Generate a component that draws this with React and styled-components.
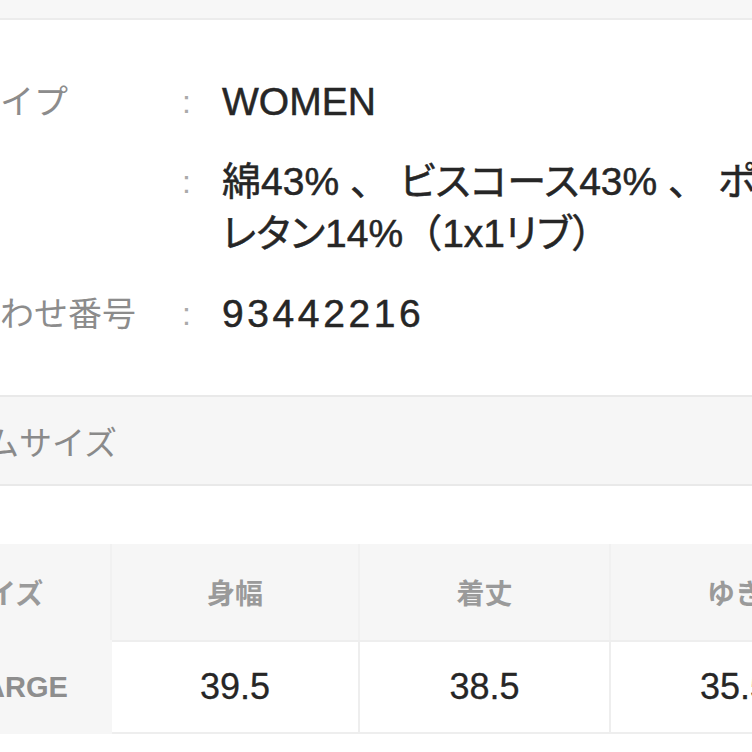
import React from 'react';
import styled, { createGlobalStyle } from 'styled-components';

const GlobalStyle = createGlobalStyle`
  html, body {
    margin: 0;
    padding: 0;
    background: #ffffff;
    overflow: hidden;
  }
  body {
    width: 752px;
    height: 752px;
    font-family: "Liberation Sans", "Noto Sans CJK JP", sans-serif;
    color: #2b2b2b;
  }
`

const Page = styled.div`
    width: 752px;
    height: 752px;
    overflow: hidden;
    display: flex;
    flex-direction: column;
`

const TopBar = styled.div`
    height: 18px;
    flex-shrink: 0;
    background: #f7f7f7;
    border-bottom: 2px solid #ececec;
`

const DetailList = styled.div`
    display: flex;
    flex-direction: column;
    gap: 28px;
    padding: 56px 0 55px;
`

const DetailRow = styled.div`
    display: grid;
    grid-template-columns: 182px 40px 1fr;
    line-height: 52px;
`

const Label = styled.div`
    font-size: 34px;
    color: #8c8c8c;
    white-space: nowrap;
`

const Colon = styled.div`
    font-size: 32px;
    color: #aaaaaa;
`

const Value = styled.div`
    font-size: 39px;
    color: #262626;
    white-space: nowrap;
    font-feature-settings: "palt";
    -webkit-text-stroke: 0.5px #262626;
    letter-spacing: ${props => props.spread ? '3.6px' : '0'};
`

// full-width punctuation keeps its whole em box
const Punct = styled.span`
    font-feature-settings: normal;
`

const SectionBand = styled.div`
    height: 87px;
    flex-shrink: 0;
    display: flex;
    align-items: center;
    background: #f6f6f6;
    border-top: 2px solid #e9e9e9;
    border-bottom: 2px solid #e9e9e9;
    font-size: 33px;
    color: #8a8a8a;
    white-space: nowrap;
    text-indent: -14px;
`

const SizeTable = styled.div`
    margin-top: 58px;
    display: grid;
    grid-template-columns: 112px 248px 251px 250px;
    grid-template-rows: 96px 94px;
    width: 861px;
`

const HeadCell = styled.div`
    display: flex;
    align-items: center;
    justify-content: ${props => props.first ? 'flex-start' : 'center'};
    background: #f6f6f6;
    border-right: 2px solid #f1f1f1;
    font-size: 28px;
    font-weight: 700;
    color: #9a9a9a;
    white-space: nowrap;
    text-indent: ${props => props.first ? '-12px' : '0'};
`

const RowHead = styled.div`
    display: flex;
    align-items: center;
    background: #f6f6f6;
    font-size: 29px;
    font-weight: 700;
    color: #8e8e8e;
    white-space: nowrap;
    text-indent: -16px;
`

const DataCell = styled.div`
    display: flex;
    align-items: center;
    justify-content: center;
    background: #ffffff;
    border: 2px solid #eeeeee;
    border-left: none;
    font-size: 36px;
    color: #262626;
    -webkit-text-stroke: 0.3px #262626;
    white-space: nowrap;
`

const details = [
    { label: 'イプ', lines: [['WOMEN']] },
    { label: '', lines: [
        ['綿43% ', <Punct key="a">、</Punct>, ' ビスコース43% ', <Punct key="b">、</Punct>, ' ポ'],
        ['レタン14%', <Punct key="c">（</Punct>, '1x1リブ', <Punct key="d">）</Punct>],
    ] },
    { label: 'わせ番号', lines: [['93442216']], spread: true },
]

const columns = ['身幅', '着丈', 'ゆき']
const values = ['39.5', '38.5', '35.5']

class App extends React.Component {
    render(){
        return(
            <Page>
                <GlobalStyle />
                <TopBar />
                <DetailList>
                    {details.map((row, i) => {
                        return (
                        <DetailRow key={i}>
                            <Label>{row.label}</Label>
                            <Colon>:</Colon>
                            <Value spread={row.spread}>
                                {row.lines.map((line, j) => <div key={j}>{line}</div>)}
                            </Value>
                        </DetailRow>
                        )
                    })}
                </DetailList>
                <SectionBand>ムサイズ</SectionBand>
                <SizeTable>
                    <HeadCell first>イズ</HeadCell>
                    {columns.map((c) => <HeadCell key={c}>{c}</HeadCell>)}
                    <RowHead>ARGE</RowHead>
                    {values.map((v, i) => <DataCell key={i}>{v}</DataCell>)}
                </SizeTable>
            </Page>
        )
    }
}

export default App;
